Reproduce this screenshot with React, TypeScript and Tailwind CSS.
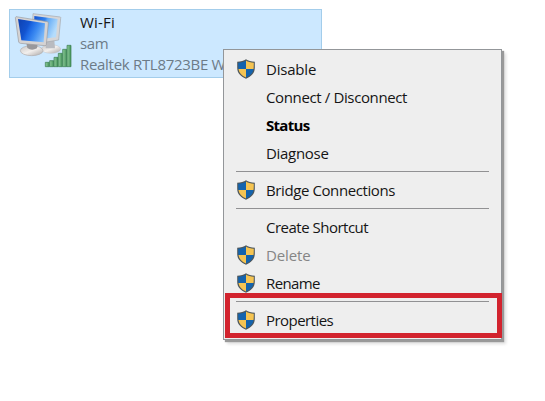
import React from "react";

function Shield() {
  return (
    <svg className="block h-5 w-5" viewBox="-1 0 20 20">
      <path d="M9 .3 C7 2 3.7 2.7.2 2.7 V9 C.3 14 3.4 17.3 9 19.7 C14.6 17.3 17.7 14 17.8 9 V2.7 C14.3 2.7 11 2 9 .3Z" fill="#4d565a" />
      <path d="M9 1.5 V10 H1.5 C1.2 8.3 1.2 6 1.2 3.7 C4.3 3.5 7 2.9 9 1.5Z" fill="#1463ad" />
      <path d="M9 1.5 V10 H16.5 C16.8 8.3 16.8 6 16.8 3.7 C13.7 3.5 11 2.9 9 1.5Z" fill="#f5c452" />
      <path d="M1.5 10 H9 V18.5 C4.7 16.6 2 14 1.5 10Z" fill="#f5c452" />
      <path d="M16.5 10 H9 V18.5 C13.3 16.6 16 14 16.5 10Z" fill="#1463ad" />
    </svg>
  );
}

function NetworkIcon() {
  return (
    <svg className="block h-[56px] w-[59px]" viewBox="42 36 177 168">
      <defs>
        <linearGradient id="screen" gradientUnits="userSpaceOnUse" x1="54" y1="70" x2="142" y2="112">
          <stop offset="0" stopColor="#0f43b4" />
          <stop offset="0.3" stopColor="#1253cf" />
          <stop offset="0.42" stopColor="#1f6be6" />
          <stop offset="0.62" stopColor="#3f8df2" />
          <stop offset="1" stopColor="#9dcffb" />
        </linearGradient>
        <linearGradient id="back" x1="0" y1="0" x2="1" y2="0.4">
          <stop offset="0" stopColor="#1453d0" />
          <stop offset="0.45" stopColor="#2f7fec" />
          <stop offset="0.55" stopColor="#5fa8f6" />
          <stop offset="1" stopColor="#b4dcfc" />
        </linearGradient>
        <linearGradient id="base" x1="0" y1="0" x2="1" y2="1">
          <stop offset="0" stopColor="#c9c6c5" />
          <stop offset="0.5" stopColor="#f2efed" />
          <stop offset="1" stopColor="#aaa6a5" />
        </linearGradient>
        <linearGradient id="bar" x1="0" y1="0" x2="1" y2="0">
          <stop offset="0" stopColor="#8fcb9c" />
          <stop offset="1" stopColor="#45945a" />
        </linearGradient>
      </defs>
      <ellipse cx="153" cy="147" rx="29" ry="13" fill="url(#base)" stroke="#b9b6b6" strokeWidth="1" />
      <path d="M137 119 L163 121 L165 145 L137 145Z" fill="#b9bbc0" />
      <path d="M99 41 L181 51 Q183 52 182 55 L176 120 L139 126 L96 110Z" fill="#d6d6d8" stroke="#a3a8ae" strokeWidth="2" />
      <path d="M103 48 L173 57 L168 112 L142 115 L102 105Z" fill="url(#back)" />
      <ellipse cx="95" cy="152" rx="34" ry="15" fill="url(#base)" stroke="#b0acac" strokeWidth="2" />
      <path d="M79 128 L113 132 L111 145 Q95 154 82 144Z" fill="#99989b" />
      <path d="M48 50 L142 65 Q145 66 145 69 L139 134 Q138 137 135 137 L61 130 Q57 129 56 126 L46 53Z" fill="#d5d3d3" stroke="#9a9a9f" strokeWidth="2" />
      <path d="M54 57 L135 70 L131 127 L64 121Z" fill="url(#screen)" />
      <g fill="url(#bar)" stroke="#347949" strokeWidth="2">
        <path d="M136 187H148V200H136Z" />
        <path d="M149 182H161V200H149Z" />
        <path d="M162 172H174V200H162Z" />
        <path d="M175 160H187V200H175Z" />
        <path d="M188 148H200V200H188Z" />
        <path d="M201 136H213V200H201Z" />
      </g>
    </svg>
  );
}

type ItemProps = { label: string; shield?: boolean; className: string };

function Item({ label, shield = false, className }: ItemProps) {
  return (
    <div className="flex h-7 items-center">
      <div className="ml-3 w-[30px] shrink-0">{shield && <Shield />}</div>
      <span className={`whitespace-nowrap text-[15px] leading-7 ${className}`}>{label}</span>
    </div>
  );
}

function Separator() {
  return (
    <div className="h-[9px] pt-1">
      <div className="mr-3 ml-3 h-px bg-[#919193]" />
    </div>
  );
}

export default function App() {
  return (
    <main className="relative h-[401px] w-[545px] overflow-hidden bg-white pt-[9px] pl-[9px] font-['Open_Sans','Noto_Sans',sans-serif]">
      <section className="flex h-[69px] w-[313px] border border-[#a3cdeb] bg-[#cce8ff] pt-[2px] pl-1">
        <NetworkIcon />
        <div className="ml-[7px] text-[15px] leading-[21px] whitespace-nowrap text-[#6c7b87]">
          <p className="tracking-[0.2px] text-[#151515]">Wi-Fi</p>
          <p className="tracking-[-0.4px]">sam</p>
          <p className="tracking-[-0.3px]">Realtek RTL8723BE W</p>
        </div>
      </section>

      <nav className="absolute top-[49px] left-[223px] h-[291px] w-[279px] border border-[#939699] bg-[#eeeeee] pt-[5px] shadow-[2px_2px_1px_#999999,4px_4px_3px_#dddddd]">
        <Item label="Disable" shield className="tracking-[-0.2px] text-[#151515]" />
        <Item label="Connect / Disconnect" className="tracking-[-0.37px] text-[#151515]" />
        <Item label="Status" className="font-bold tracking-[-0.7px] text-black" />
        <Item label="Diagnose" className="tracking-[-0.3px] text-[#151515]" />
        <Separator />
        <Item label="Bridge Connections" shield className="tracking-[-0.4px] text-[#151515]" />
        <Separator />
        <Item label="Create Shortcut" className="tracking-[-0.5px] text-[#151515]" />
        <Item label="Delete" shield className="tracking-[-0.1px] text-[#858585]" />
        <Item label="Rename" shield className="tracking-[-0.6px] text-[#151515]" />
        <Separator />
        <Item label="Properties" shield className="tracking-[-0.55px] text-[#151515]" />
      </nav>
      <div className="absolute top-[293px] left-[225px] h-[45px] w-[277px] border-5 border-[#d2232e]" />
    </main>
  );
}
